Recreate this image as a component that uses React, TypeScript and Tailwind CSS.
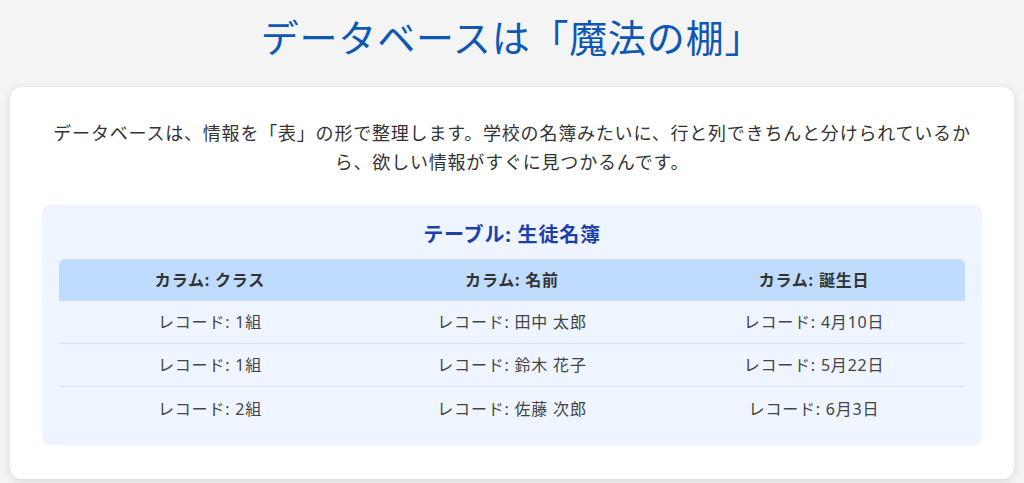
import React from "react"

const rows = [
  ["1組", "田中 太郎", "4月10日"],
  ["1組", "鈴木 花子", "5月22日"],
  ["2組", "佐藤 次郎", "6月3日"],
]

const headers = ["クラス", "名前", "誕生日"]

export default function App() {
  return (
    <div
      className="min-h-screen bg-[#f4f4f4] px-[10px] pt-[15px] pb-[8px] tracking-[0.05em]"
      style={{ fontFamily: '"Noto Sans", "Noto Sans CJK JP", sans-serif' }}
    >
      {/* Title */}
      <h1 className="text-center text-[38px] leading-[44px] text-[#0d58b5] font-normal mb-[28px]">
        データベースは「魔法の棚」
      </h1>

      {/* Card */}
      <div className="bg-white rounded-xl shadow-[0_2px_8px_rgba(0,0,0,0.12)] px-8 pt-8 pb-[34px]">
        <p className="text-center text-[18px] leading-[29px] text-[#333] mb-7">
          データベースは、情報を「表」の形で整理します。学校の名簿みたいに、行と列できちんと分けられているから、欲しい情報がすぐに見つかるんです。
        </p>

        {/* Table panel */}
        <div className="bg-[#eef5ff] rounded-lg px-[17px] pt-4 pb-[15px]">
          <h2 className="text-center text-[20px] leading-[28px] font-bold text-[#1e40af] mb-[10px]">
            テーブル: 生徒名簿
          </h2>
          <div>
            <div className="grid grid-cols-3 bg-[#bfdbfe] rounded-t-md h-[42px] items-center">
              {headers.map((h) => (
                <div key={h} className="text-center text-[16px] font-bold text-[#333]">
                  カラム: {h}
                </div>
              ))}
            </div>
            {rows.map((r, i) => (
              <div
                key={i}
                className={
                  i < rows.length - 1
                    ? "grid grid-cols-3 h-[43px] items-center border-b border-[#d4e4f7]"
                    : "grid grid-cols-3 h-[43px] items-center"
                }
              >
                {r.map((c) => (
                  <div key={c} className="text-center text-[16px] text-[#444]">
                    レコード: {c}
                  </div>
                ))}
              </div>
            ))}
          </div>
        </div>
      </div>
    </div>
  )
}
